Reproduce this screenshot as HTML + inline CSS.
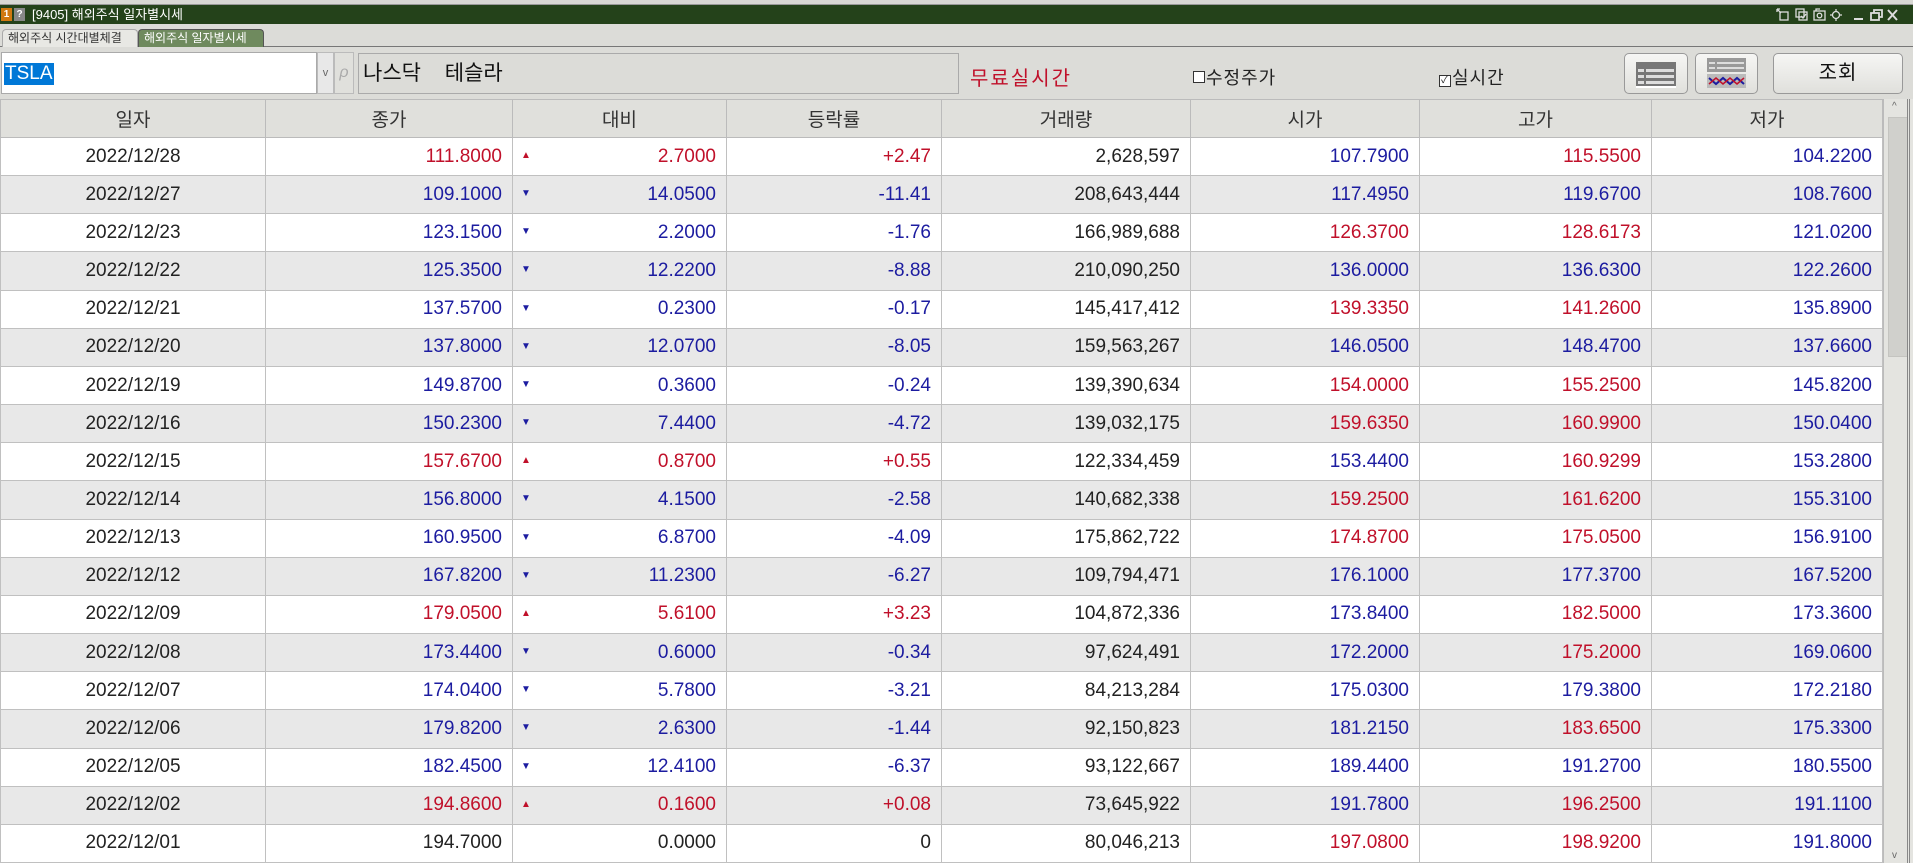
<!DOCTYPE html>
<html><head><meta charset="utf-8">
<style>
*{margin:0;padding:0;box-sizing:border-box}
body{width:1913px;height:863px;overflow:hidden;background:#dcdcd8;font-family:"Liberation Sans","Noto Sans CJK KR",sans-serif;position:relative}
.top{position:absolute;left:0;top:0;width:1913px;height:5px;background:#d8d8d4;border-bottom:1px solid #999}
.title{position:absolute;left:0;top:5px;width:1913px;height:19px;background:#24421a;color:#fff;font-size:13px;line-height:19px}
.title .i1{position:absolute;left:1px;top:3px;width:11px;height:13px;background:#d07810;color:#fff;font-size:10px;line-height:13px;text-align:center;font-weight:bold}
.title .i2{position:absolute;left:14px;top:3px;width:11px;height:13px;background:#888;color:#fff;font-size:10px;line-height:13px;text-align:center;font-weight:bold}
.title .t{position:absolute;left:32px;top:0}
.title svg{position:absolute;left:1774px;top:0}
.tabs{position:absolute;left:0;top:24px;width:1913px;height:23px;background:#dcdcd8;border-bottom:1px solid #777}
.tab{position:absolute;top:5px;height:18px;font-size:12px;line-height:17px;padding:0 5px;border:1px solid #aaa;border-bottom:none;border-radius:4px 4px 0 0;color:#333;background:#e8e8e4}
.tab.on{background:#6f8a5e;color:#fff;border-color:#555}
.inp{position:absolute;left:1px;top:52px;width:316px;height:42px;background:#fff;border:1px solid #aaa}
.inp span{position:absolute;left:2px;top:10px;background:#0078d7;color:#fff;font-size:19px;line-height:22px;padding:0 1px}
.dd{position:absolute;left:317px;top:52px;width:17px;height:42px;background:#e8e8e8;border:1px solid #bbb;font-size:11px;color:#666;text-align:center;line-height:40px}
.mg{position:absolute;left:334px;top:52px;width:20px;height:42px;background:#e0e0dc;border:1px solid #bbb;font-size:16px;color:#aaa;text-align:center;line-height:40px;font-style:italic}
.nm{position:absolute;left:358px;top:53px;width:601px;height:41px;background:#dcdcd8;border:1px solid #aaa;font-size:21px;line-height:39px;padding-left:4px;color:#111;word-spacing:18px}
.free{position:absolute;left:970px;top:62px;color:#c0102a;font-size:20px;letter-spacing:2px}
.cb{position:absolute;top:64px;font-size:18px;color:#222;letter-spacing:1px}
.cb i{display:inline-block;width:12px;height:12px;border:1px solid #333;background:#fff;vertical-align:1px;margin-right:1px;font-style:normal;font-size:10px;line-height:10px;text-align:center}
.btn{position:absolute;top:53px;height:41px;border:1px solid #999;border-radius:5px;background:linear-gradient(#f6f6f4,#e0e0dc)}
.btn.q{font-size:20px;text-align:center;line-height:39px;color:#111;letter-spacing:1px}
table{position:absolute;left:0;top:99px;border-collapse:collapse;table-layout:fixed;width:1882px}
td,th{border:1px solid #c0c0c0;font-weight:normal;font-size:19px;height:38.17px;padding:0 10px;white-space:nowrap;overflow:hidden}
th{background:#e0e0dc;height:38px;text-align:center;color:#333;font-size:19px;border-color:#bbb}
td{text-align:right;color:#222}
td.d{text-align:center}
tr:nth-child(odd) td{background:#e8e8e8}
tr:nth-child(even) td{background:#fff}
.r{color:#c0102a!important}
.b{color:#1c1ca0!important}
td.s{position:relative}
td.s em{position:absolute;left:8px;top:13px;font-style:normal;font-size:10px;line-height:10px}
.sb{position:absolute;left:1883px;top:99px;width:30px;height:764px;background:#e4e4e0;border-left:1px solid #bbb}
.sb .th{position:absolute;left:4px;top:18px;width:20px;height:240px;background:#d0d0cc;border:1px solid #c4c4c0}
.sb .l{position:absolute;right:3px;top:0;width:3px;height:764px;border-left:1px solid #888;border-right:1px solid #888}
.sb .u{position:absolute;left:8px;top:2px;font-size:10px;color:#666}
.sb .dn{position:absolute;left:8px;bottom:2px;font-size:10px;color:#666}
</style></head><body>
<div class="top"></div>
<div class="title"><div class="i1">1</div><div class="i2">?</div><div class="t">[9405] 해외주식 일자별시세</div>
<svg width="130" height="19" viewBox="0 0 130 19" fill="none" stroke="#ddd" stroke-width="1.3">
<path d="M3 4l4 4M3 4h3M3 4v3"/><rect x="6" y="7" width="8" height="8"/>
<rect x="22" y="4" width="8" height="8"/><rect x="25" y="7" width="8" height="8"/><path d="M27 11l2 2 3-4"/>
<rect x="40" y="6" width="11" height="9"/><circle cx="45.5" cy="10.5" r="2.3"/><path d="M42 6v-2h4"/>
<circle cx="62" cy="10" r="3.5"/><path d="M62 4v2M62 14v2M56 10h2M66 10h2"/>
<path d="M80 14h9" stroke-width="2"/>
<rect x="97" y="8" width="8" height="7" stroke-width="1.8"/><path d="M100 8V5h8v7h-3" stroke-width="1.8"/>
<path d="M114 5l9 10M123 5l-9 10" stroke-width="2"/></svg></div>
<div class="tabs"><div class="tab" style="left:2px;width:136px">해외주식 시간대별체결</div><div class="tab on" style="left:138px;width:126px">해외주식 일자별시세</div></div>
<div class="inp"><span>TSLA</span></div>
<div class="dd">v</div>
<div class="mg">ρ</div>
<div class="nm">나스닥 테슬라</div>
<div class="free">무료실시간</div>
<div class="cb" style="left:1193px"><i></i>수정주가</div>
<div class="cb" style="left:1439px"><i>✓</i>실시간</div>
<div class="btn" style="left:1624px;width:64px">
<svg width="62" height="39" viewBox="0 0 62 39"><rect x="11" y="8" width="40" height="24" fill="#777"/><g fill="#ddd"><rect x="13" y="15" width="6" height="3"/><rect x="21" y="15" width="28" height="3"/><rect x="13" y="21" width="6" height="3"/><rect x="21" y="21" width="28" height="3"/><rect x="13" y="27" width="6" height="3"/><rect x="21" y="27" width="28" height="3"/></g><rect x="11" y="32" width="40" height="2" fill="#fff"/></svg></div>
<div class="btn" style="left:1695px;width:63px">
<svg width="61" height="39" viewBox="0 0 61 39"><rect x="11" y="4" width="39" height="14" fill="#999"/><g fill="#ddd"><rect x="13" y="8" width="6" height="2"/><rect x="21" y="8" width="27" height="2"/><rect x="13" y="13" width="6" height="2"/><rect x="21" y="13" width="27" height="2"/></g><rect x="11" y="20" width="39" height="14" fill="#bbb"/><polyline points="13,24 20,30 27,24 34,30 41,24 48,30" fill="none" stroke="#1c1ca0" stroke-width="2"/><polyline points="13,30 20,24 27,30 34,24 41,30 48,24" fill="none" stroke="#c0102a" stroke-width="1.5"/></svg></div>
<div class="btn q" style="left:1773px;width:130px">조회</div>
<table>
<colgroup><col style="width:265px"><col style="width:247px"><col style="width:214px"><col style="width:215px"><col style="width:249px"><col style="width:229px"><col style="width:232px"><col style="width:231px"></colgroup>
<tr><th>일자</th><th>종가</th><th>대비</th><th>등락률</th><th>거래량</th><th>시가</th><th>고가</th><th>저가</th></tr>
<tr><td class="d">2022/12/28</td><td class="r">111.8000</td><td class="s r"><em>▲</em>2.7000</td><td class="r">+2.47</td><td>2,628,597</td><td class="b">107.7900</td><td class="r">115.5500</td><td class="b">104.2200</td></tr>
<tr><td class="d">2022/12/27</td><td class="b">109.1000</td><td class="s b"><em>▼</em>14.0500</td><td class="b">-11.41</td><td>208,643,444</td><td class="b">117.4950</td><td class="b">119.6700</td><td class="b">108.7600</td></tr>
<tr><td class="d">2022/12/23</td><td class="b">123.1500</td><td class="s b"><em>▼</em>2.2000</td><td class="b">-1.76</td><td>166,989,688</td><td class="r">126.3700</td><td class="r">128.6173</td><td class="b">121.0200</td></tr>
<tr><td class="d">2022/12/22</td><td class="b">125.3500</td><td class="s b"><em>▼</em>12.2200</td><td class="b">-8.88</td><td>210,090,250</td><td class="b">136.0000</td><td class="b">136.6300</td><td class="b">122.2600</td></tr>
<tr><td class="d">2022/12/21</td><td class="b">137.5700</td><td class="s b"><em>▼</em>0.2300</td><td class="b">-0.17</td><td>145,417,412</td><td class="r">139.3350</td><td class="r">141.2600</td><td class="b">135.8900</td></tr>
<tr><td class="d">2022/12/20</td><td class="b">137.8000</td><td class="s b"><em>▼</em>12.0700</td><td class="b">-8.05</td><td>159,563,267</td><td class="b">146.0500</td><td class="b">148.4700</td><td class="b">137.6600</td></tr>
<tr><td class="d">2022/12/19</td><td class="b">149.8700</td><td class="s b"><em>▼</em>0.3600</td><td class="b">-0.24</td><td>139,390,634</td><td class="r">154.0000</td><td class="r">155.2500</td><td class="b">145.8200</td></tr>
<tr><td class="d">2022/12/16</td><td class="b">150.2300</td><td class="s b"><em>▼</em>7.4400</td><td class="b">-4.72</td><td>139,032,175</td><td class="r">159.6350</td><td class="r">160.9900</td><td class="b">150.0400</td></tr>
<tr><td class="d">2022/12/15</td><td class="r">157.6700</td><td class="s r"><em>▲</em>0.8700</td><td class="r">+0.55</td><td>122,334,459</td><td class="b">153.4400</td><td class="r">160.9299</td><td class="b">153.2800</td></tr>
<tr><td class="d">2022/12/14</td><td class="b">156.8000</td><td class="s b"><em>▼</em>4.1500</td><td class="b">-2.58</td><td>140,682,338</td><td class="r">159.2500</td><td class="r">161.6200</td><td class="b">155.3100</td></tr>
<tr><td class="d">2022/12/13</td><td class="b">160.9500</td><td class="s b"><em>▼</em>6.8700</td><td class="b">-4.09</td><td>175,862,722</td><td class="r">174.8700</td><td class="r">175.0500</td><td class="b">156.9100</td></tr>
<tr><td class="d">2022/12/12</td><td class="b">167.8200</td><td class="s b"><em>▼</em>11.2300</td><td class="b">-6.27</td><td>109,794,471</td><td class="b">176.1000</td><td class="b">177.3700</td><td class="b">167.5200</td></tr>
<tr><td class="d">2022/12/09</td><td class="r">179.0500</td><td class="s r"><em>▲</em>5.6100</td><td class="r">+3.23</td><td>104,872,336</td><td class="b">173.8400</td><td class="r">182.5000</td><td class="b">173.3600</td></tr>
<tr><td class="d">2022/12/08</td><td class="b">173.4400</td><td class="s b"><em>▼</em>0.6000</td><td class="b">-0.34</td><td>97,624,491</td><td class="b">172.2000</td><td class="r">175.2000</td><td class="b">169.0600</td></tr>
<tr><td class="d">2022/12/07</td><td class="b">174.0400</td><td class="s b"><em>▼</em>5.7800</td><td class="b">-3.21</td><td>84,213,284</td><td class="b">175.0300</td><td class="b">179.3800</td><td class="b">172.2180</td></tr>
<tr><td class="d">2022/12/06</td><td class="b">179.8200</td><td class="s b"><em>▼</em>2.6300</td><td class="b">-1.44</td><td>92,150,823</td><td class="b">181.2150</td><td class="r">183.6500</td><td class="b">175.3300</td></tr>
<tr><td class="d">2022/12/05</td><td class="b">182.4500</td><td class="s b"><em>▼</em>12.4100</td><td class="b">-6.37</td><td>93,122,667</td><td class="b">189.4400</td><td class="b">191.2700</td><td class="b">180.5500</td></tr>
<tr><td class="d">2022/12/02</td><td class="r">194.8600</td><td class="s r"><em>▲</em>0.1600</td><td class="r">+0.08</td><td>73,645,922</td><td class="b">191.7800</td><td class="r">196.2500</td><td class="b">191.1100</td></tr>
<tr><td class="d">2022/12/01</td><td>194.7000</td><td class="s">0.0000</td><td>0</td><td>80,046,213</td><td class="r">197.0800</td><td class="r">198.9200</td><td class="b">191.8000</td></tr>
</table>
<div class="sb"><div class="th"></div><div class="l"></div><div class="u">^</div><div class="dn">v</div></div>
</body></html>
